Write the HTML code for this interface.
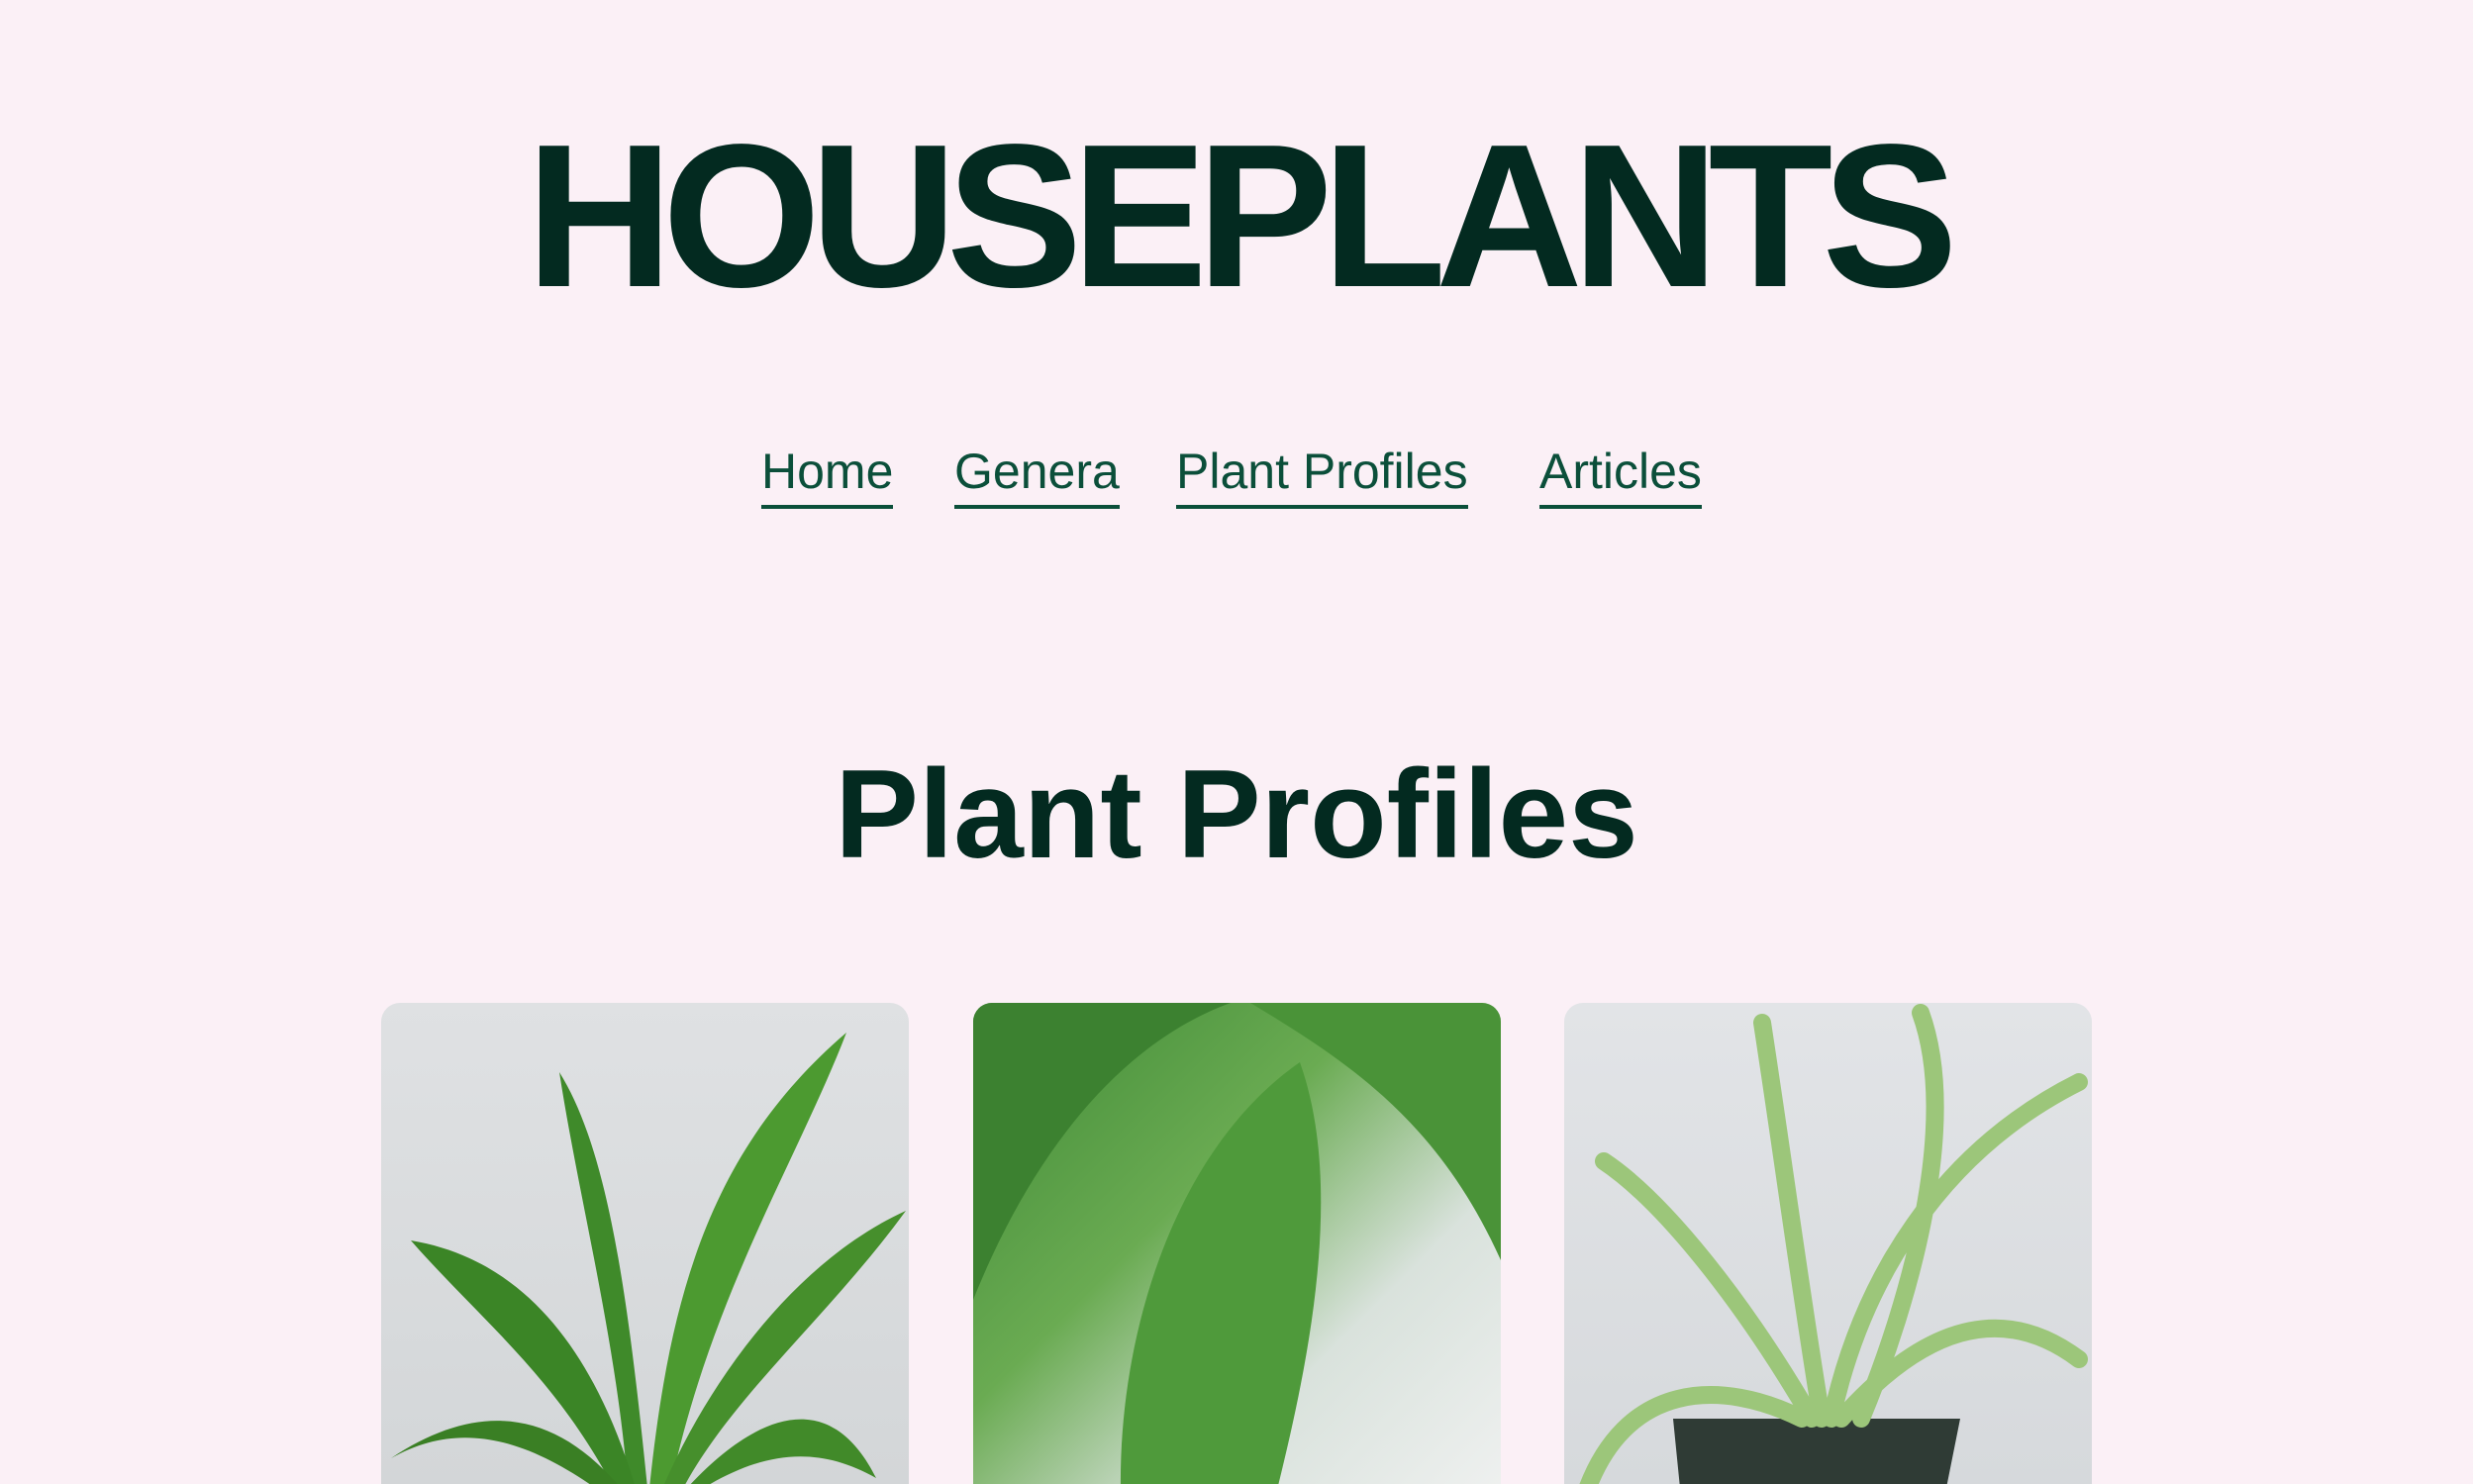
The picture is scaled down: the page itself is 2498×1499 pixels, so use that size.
<!DOCTYPE html>
<html><head><style>
html,body{margin:0;padding:0;width:2498px;height:1499px;overflow:hidden}
body{background:#fbf0f6;position:relative;font-family:"Liberation Sans",Arial,sans-serif}
h1{position:absolute;left:0;width:2498px;top:118px;margin:0;text-align:center;font-size:206px;font-weight:bold;color:#032a20;letter-spacing:-11px;line-height:200px}
.nav a{position:absolute;top:446px;font-size:50px;color:#0b4f3a;text-decoration:none;line-height:60px;border-bottom:4px solid #0b4f3a;padding-bottom:4px}
h2{position:absolute;left:0;width:2498px;top:752px;margin:0;text-align:center;font-size:127px;font-weight:bold;color:#032a20;line-height:140px}
.card{position:absolute;top:1013px;width:533px;height:486px;border-radius:19px 19px 0 0;overflow:hidden}
</style></head><body>
<h1>HOUSEPLANTS</h1>
<div class="nav">
<a style="left:769px">Home</a>
<a style="left:964px">Genera</a>
<a style="left:1188px">Plant Profiles</a>
<a style="left:1555px">Articles</a>
</div>
<h2>Plant Profiles</h2>
<div class="card" style="left:385px;background:linear-gradient(180deg,#dfe1e3,#d3d6d8)">
<svg width="533" height="486" viewBox="0 0 533 486">
<path d="M250 500 C240 350 200 200 180 70 C230 150 250 300 270 500Z" fill="#3f8a2a"/>
<path d="M270 500 C290 300 330 150 470 30 C420 160 330 300 290 500Z" fill="#4c9a30"/>
<path d="M240 500 C180 380 100 320 30 240 C150 260 220 360 260 500Z" fill="#3b8526"/>
<path d="M280 500 C330 380 420 260 530 210 C450 320 350 400 300 500Z" fill="#468f2c"/>
<path d="M230 500 C150 440 80 420 10 460 C100 400 180 410 250 500Z" fill="#3a7f24"/>
<path d="M300 500 C370 420 450 380 500 480 C430 440 370 460 310 500Z" fill="#418a29"/>
</svg></div>
<div class="card" style="left:983px;background:linear-gradient(135deg,#3f8a36,#6aab52 40%,#d9e2dc 70%,#eef0ef)">
<svg width="533" height="486" viewBox="0 0 533 486">
<path d="M150 520 C140 350 200 150 330 60 C380 200 330 400 300 520Z" fill="#4f9a3b"/>
<path d="M0 300 C60 150 150 40 260 0 L0 0Z" fill="#3c8130"/>
<path d="M280 0 C380 60 470 120 533 260 L533 0Z" fill="#4a9338"/>
</svg></div>
<div class="card" style="left:1580px;background:linear-gradient(180deg,#e2e4e7,#d6d9dc)">
<svg width="533" height="486" viewBox="0 0 533 486">
<path d="M120 520 L380 520 L400 420 L110 420Z" fill="#2f3b35"/>
<g fill="none" stroke="#9cc67a" stroke-width="18" stroke-linecap="round">
<path d="M260 420 C240 300 220 150 200 20"/>
<path d="M270 420 C300 280 380 150 520 80"/>
<path d="M250 420 C180 300 100 200 40 160"/>
<path d="M280 420 C360 330 440 300 520 360"/>
<path d="M240 420 C160 380 60 380 20 500"/>
<path d="M300 420 C350 300 400 120 360 10"/>
</g></svg></div>
</body></html>
